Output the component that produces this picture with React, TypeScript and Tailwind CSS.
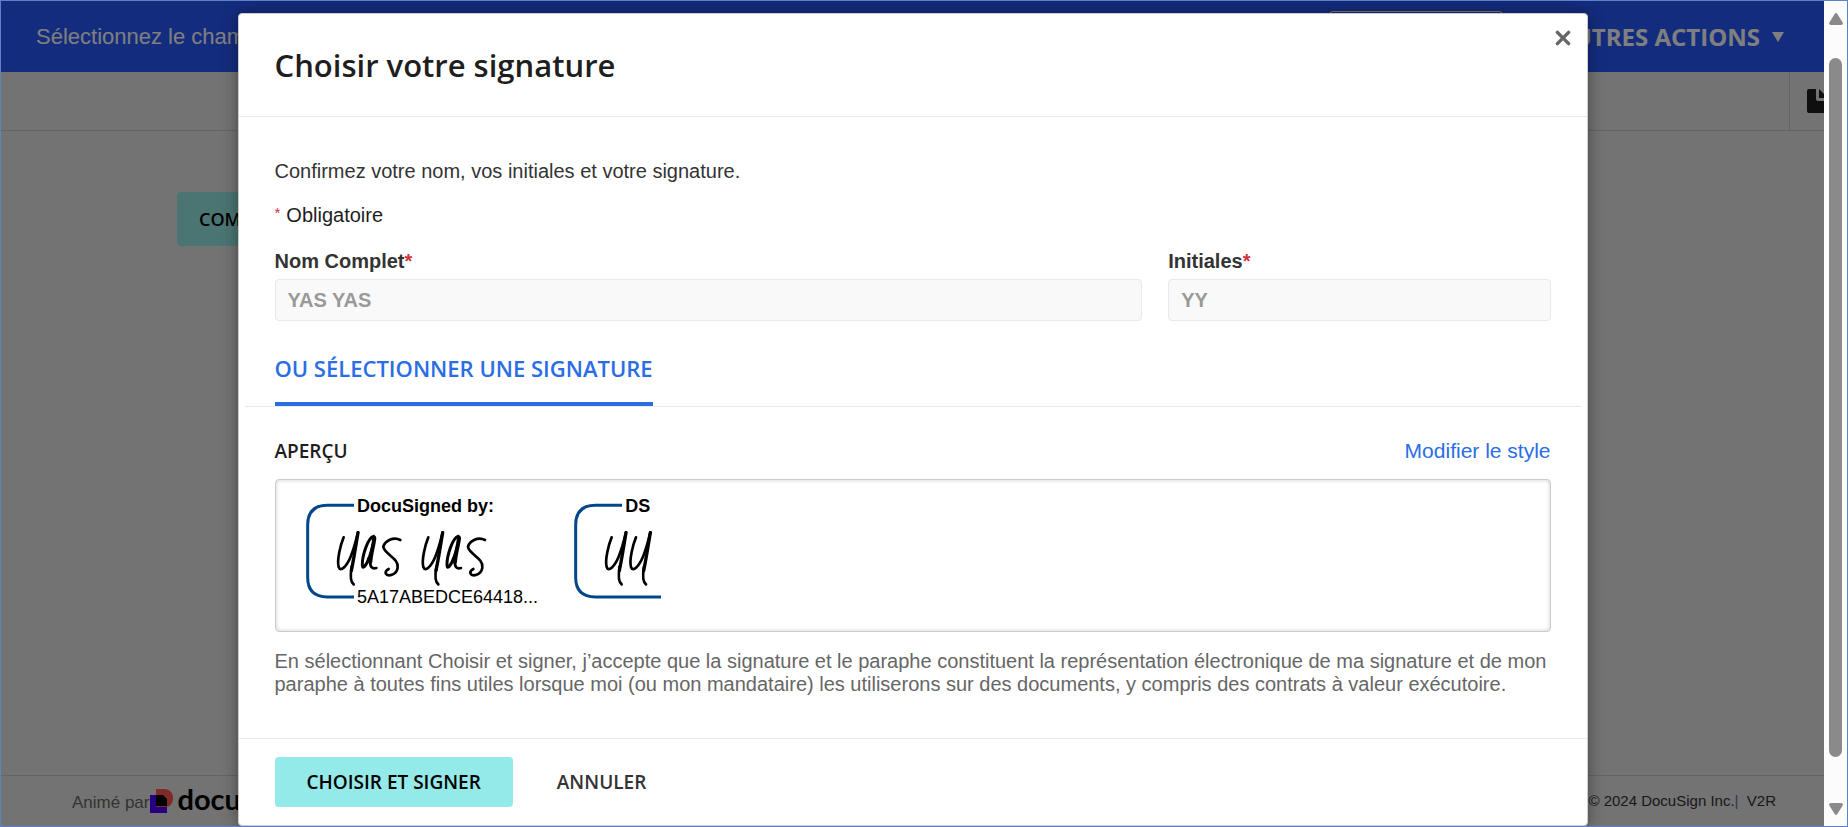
import React from "react";

const sans = "font-['Liberation_Sans',Arial,sans-serif]";
const display = "font-['Open_Sans','Noto_Sans',sans-serif]";

function Required() {
  return <span className="text-[#d13239]">*</span>;
}

function NoteIcon() {
  return (
    <svg width="24" height="24" viewBox="0 0 24 24" aria-hidden="true">
      <path fill="#1e1e1e" d="M2 0H9V10a2 2 0 0 0 2 2H24V22a2 2 0 0 1-2 2H2a2 2 0 0 1-2-2V2a2 2 0 0 1 2-2Z" />
      <path fill="#1e1e1e" d="M12 0V9H21Z" />
    </svg>
  );
}

function BrandMark() {
  return (
    <svg width="23" height="24" viewBox="0 0 23 24" aria-hidden="true">
      <path fill="#4c00ff" d="M0 6H17V24H0Z" />
      <path fill="#ff5252" d="M6 0H14C20 0 23 4 23 9S20 18 16 18H6Z" />
      <path fill="#000" d="M6 6H13L17 10V17H6Z" />
    </svg>
  );
}

function LetterY() {
  return (
    <>
      <path strokeWidth="8" d="M251 352C242 374 230 420 236 441C242 458 260 438 272 410C281 388 289 358 294 337" />
      <path strokeWidth="10" d="M294 338C288 375 280 425 274 452" />
      <path strokeWidth="8" d="M275 440C271 463 269 484 281 493" />
    </>
  );
}

function NamePen() {
  return (
    <g fill="none" stroke="#000" strokeLinecap="round" strokeLinejoin="round">
      <LetterY />
      <path strokeWidth="9" d="M341 349C323 353 306 410 307 436C308 450 319 436 326 416" />
      <path strokeWidth="12" d="M343 354C341 376 332 402 331 426" />
      <path strokeWidth="8" d="M326 416C334 396 341 370 344 352M331 424C329 440 336 448 349 444" />
      <path strokeWidth="8" d="M421 360C400 349 375 363 370 380C371 401 418 415 413 443C409 466 383 471 377 460C376 452 382 449 386 447" />
    </g>
  );
}

function InitialPen() {
  return (
    <g fill="none" stroke="#000" strokeLinecap="round" strokeLinejoin="round">
      <LetterY />
    </g>
  );
}

function SignatureStamp() {
  return (
    <svg width="236" height="120" viewBox="138 210 708 360" role="img" aria-label="Signature" className={sans}>
      <path fill="none" stroke="#00468b" strokeWidth="9" d="M282 256H202Q143 256 143 315V472Q143 531 202 531H282" />
      <text x="291" y="277" fontSize="54" fontWeight="700">DocuSigned by:</text>
      <NamePen />
      <g transform="translate(254 0)">
        <NamePen />
      </g>
      <text x="291" y="549" fontSize="54">5A17ABEDCE64418...</text>
    </svg>
  );
}

function InitialsStamp() {
  return (
    <svg width="90" height="120" viewBox="942 210 270 360" role="img" aria-label="Paraphe" className={sans}>
      <path fill="none" stroke="#00468b" strokeWidth="9" d="M1086 256H1006Q947 256 947 315V472Q947 531 1006 531H1203" />
      <text x="1096" y="277" fontSize="54" fontWeight="700">DS</text>
      <g transform="translate(804 0)">
        <InitialPen />
      </g>
      <g transform="translate(877 0)">
        <InitialPen />
      </g>
    </svg>
  );
}

function Page() {
  return (
    <div className="flex min-w-0 flex-1 flex-col bg-[#e6e6e6]">
      <header className="flex h-[71px] items-center justify-between bg-[#2858fc] pr-10 pl-[35px] text-white">
        <p className="text-[22px]">Sélectionnez le champ</p>
        <div className="flex items-center gap-[54px]">
          <button type="button" className="h-[51px] w-[174px] rounded-sm border border-white" aria-label="Terminer" />
          <button type="button" className={`flex items-center gap-3 text-[24px] font-bold ${display}`}>
            AUTRES ACTIONS
            <svg width="12" height="10" viewBox="0 0 12 10" aria-hidden="true">
              <path fill="#fff" d="M0 0H12L6 10Z" />
            </svg>
          </button>
        </div>
      </header>
      <div className="flex h-[59px] justify-end overflow-hidden border-b border-[#c8c8c8]">
        <button type="button" className="flex w-[35px] shrink-0 items-center overflow-hidden border-l border-[#c8c8c8] pl-[17px]" aria-label="Commentaires">
          <span className="shrink-0">
            <NoteIcon />
          </span>
        </button>
      </div>
      <main className="flex-1 px-44 pt-[61px]">
        <button type="button" className={`h-[54px] rounded-sm bg-[#94eae4] px-[22px] text-[18px] font-semibold text-black ${display}`}>
          COMMENCER
        </button>
      </main>
      <footer className="flex h-[51px] items-center justify-between border-t border-[#c8c8c8] pr-12 pl-[71px] text-[#333]">
        <div className="flex items-center">
          <span className="pt-1 pr-px text-[17px] text-[#666]">Animé par</span>
          <BrandMark />
          <span className="pb-1 pl-1 font-['Lato',sans-serif] text-[29px] leading-8 font-bold text-black">docusign</span>
        </div>
        <p className="text-[15px]">
          Copyright © 2024 DocuSign Inc.<span className="text-[#4d77a8]">|</span>&nbsp; V2R
        </p>
      </footer>
    </div>
  );
}

function ScrollTrack() {
  return (
    <div className="flex w-[23px] shrink-0 flex-col items-center justify-between bg-[#fcfcfc] pt-3 pb-[11px]" aria-hidden="true">
      <svg width="14" height="12" viewBox="0 0 14 12">
        <path fill="#8a8a8a" d="M7 0Q8 0 9 2L14 10Q14 12 12 12H2Q0 12 0 10L5 2Q6 0 7 0Z" />
      </svg>
      <div className="mt-[33px] mb-[46px] w-[13px] flex-1 rounded-full bg-[#8a8a8a]" />
      <svg width="14" height="12" viewBox="0 0 14 12">
        <path fill="#8a8a8a" d="M7 12Q8 12 9 10L14 2Q14 0 12 0H2Q0 0 0 2L5 10Q6 12 7 12Z" />
      </svg>
    </div>
  );
}

function Field({ id, label, value }: { id: string; label: string; value: string }) {
  return (
    <div>
      <label htmlFor={id} className="block text-[20px] leading-6 font-bold text-[#333]">
        {label}
        <Required />
      </label>
      <input
        id={id}
        disabled
        defaultValue={value}
        className="mt-1.5 block h-[42px] w-full rounded-sm border border-[#e9e9e9] bg-[#f9f9f9] px-3 text-[20px] font-bold text-[#999]"
      />
    </div>
  );
}

function SignatureDialog() {
  return (
    <section
      role="dialog"
      aria-labelledby="dialog-title"
      className="w-full max-w-[1350px] rounded-sm border border-[#ccc] bg-white shadow-[0_0_16px_rgba(0,0,0,0.4)]"
    >
      <header className="relative flex h-[103px] items-center border-b border-[#e9e9e9] px-9">
        <h1 id="dialog-title" className={`text-[31px] font-semibold text-[#1e1e1e] ${display}`}>
          Choisir votre signature
        </h1>
        <button type="button" aria-label="Fermer" className="absolute top-4 right-4">
          <svg width="16" height="16" viewBox="0 0 16 16" aria-hidden="true">
            <path fill="none" stroke="#666" strokeWidth="3.4" strokeLinecap="round" d="M2.4 2.4L13.6 13.6M13.6 2.4L2.4 13.6" />
          </svg>
        </button>
      </header>

      <div className="px-9 pt-[42px]">
        <p className="text-[20px] leading-6 text-[#333]">Confirmez votre nom, vos initiales et votre signature.</p>
        <p className="mt-5 flex gap-1.5 text-[20px] leading-6 text-[#1e1e1e]">
          <span className="text-[15px] leading-5 text-[#d13239]">*</span>
          <span>Obligatoire</span>
        </p>
        <div className="mt-[22px] grid grid-cols-[867fr_382fr] gap-[26px]">
          <Field id="full-name" label="Nom Complet" value="YAS YAS" />
          <Field id="initials" label="Initiales" value="YY" />
        </div>
      </div>

      <div className="mx-1.5 mt-[35px] border-b border-[#e9e9e9] px-[30px]">
        <button type="button" className={`block border-b-4 border-[#2a6de5] pb-[22px] text-[22px] leading-6 font-semibold text-[#2a6de5] ${display}`}>
          OU SÉLECTIONNER UNE SIGNATURE
        </button>
      </div>

      <div className="px-9 pt-8">
        <div className="flex items-center justify-between leading-6">
          <h2 className={`text-[19px] font-semibold text-[#1e1e1e] ${display}`}>APERÇU</h2>
          <a href="#style" className="text-[21px] text-[#2a6de5]">
            Modifier le style
          </a>
        </div>
        <div className="mt-4 flex h-[153px] items-start gap-8 rounded-sm border border-[#ccc] px-[30px] pt-2.5 shadow-[inset_0_0_4px_rgba(0,0,0,0.2)]">
          <SignatureStamp />
          <InitialsStamp />
        </div>
        <p className="mt-[18px] text-[20px] leading-[23px] text-[#666]">
          En sélectionnant Choisir et signer, j’accepte que la signature et le paraphe constituent la représentation électronique de ma signature et de mon paraphe à toutes fins utiles lorsque moi (ou mon mandataire) les utiliserons sur des documents, y compris des contrats à valeur exécutoire.
        </p>
      </div>

      <footer className={`mt-[42px] flex gap-4 border-t border-[#e9e9e9] px-9 py-[18px] text-[19px] font-semibold ${display}`}>
        <button type="button" className="h-[50px] rounded-sm bg-[#94eae9] px-8 text-black">
          CHOISIR ET SIGNER
        </button>
        <button type="button" className="h-[50px] px-7 text-[#333]">
          ANNULER
        </button>
      </footer>
    </section>
  );
}

export default function App() {
  return (
    <div className={`flex min-h-screen border border-[#5f82c4] ${sans}`}>
      <div className="relative flex min-w-0 flex-1">
        <Page />
        <div className="absolute inset-0 flex items-start justify-center overflow-hidden bg-black/50 pt-3">
          <SignatureDialog />
        </div>
      </div>
      <ScrollTrack />
    </div>
  );
}
